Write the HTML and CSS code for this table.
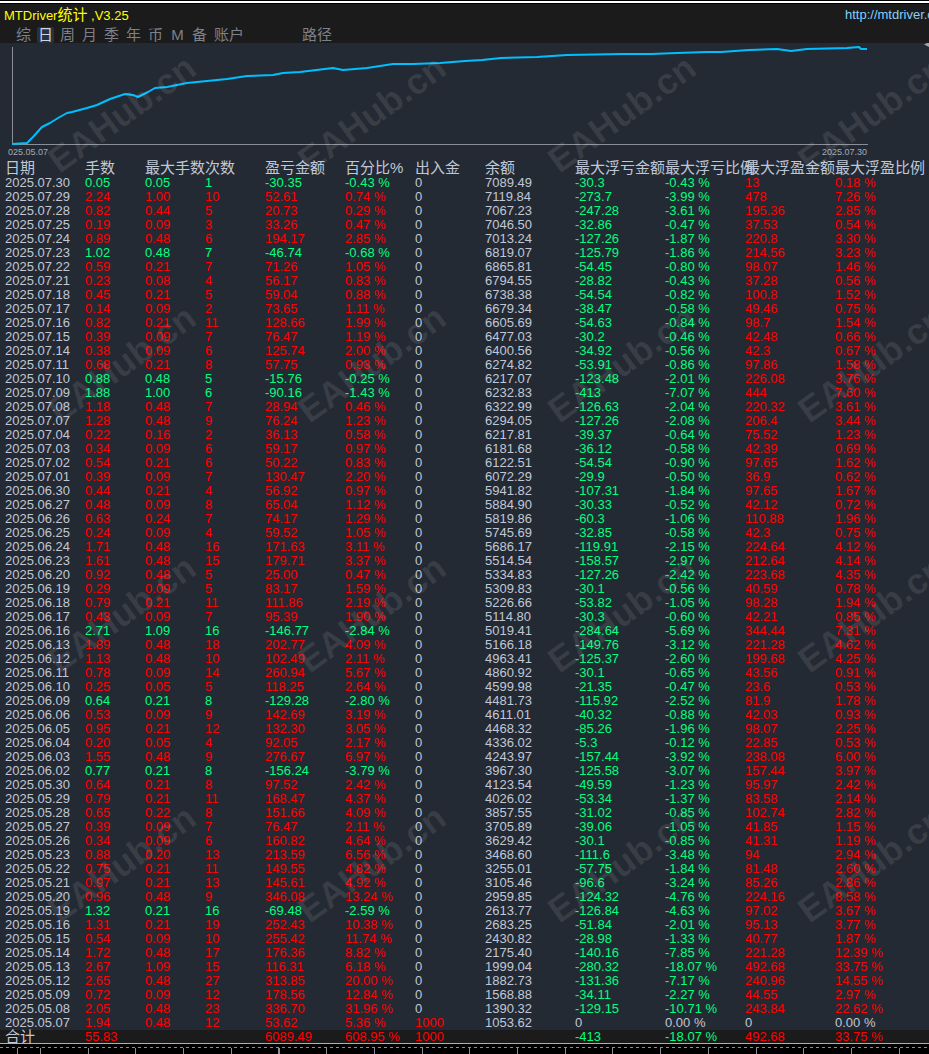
FILE: index.html
```html
<!DOCTYPE html>
<html lang="zh-CN">
<head>
<meta charset="utf-8">
<title>MTDriver统计</title>
<link rel="stylesheet" href="styles.css">
</head>
<body>
<div class="app">
  <div class="topline"></div>
  <header class="titlebar">
    <div class="title-row">
      <span class="title">MTDriver<span class="cjk">统计</span> ,V3.25</span>
      <span class="link">http://mtdriver.cn</span>
    </div>
    <nav class="tabs">
      <span class="tab">综</span><span class="tab active">日</span><span class="tab">周</span><span class="tab">月</span><span class="tab">季</span><span class="tab">年</span><span class="tab">币</span><span class="tab">M</span><span class="tab">备</span><span class="tab wide">账户</span><span class="tab path">路径</span>
    </nav>
  </header>
  <section class="chart">
    <svg class="curve" width="929" height="117" viewBox="0 0 929 117">
      <line class="axisline" x1="12.5" y1="4" x2="12.5" y2="101.5"/>
      <line class="axisline" x1="12" y1="101.5" x2="868" y2="101.5"/>
      <polyline class="equity" points="12,101 27,100 33,94 42,84 50,80 58,75 67,70 72,69 87,65 97,62 110,56 125,51 133,52 138,54 148,49 155,45 167,44 187,40 207,38 227,36 247,33 273,32 283,30 300,29 333,25 343,27 367,25 393,21 413,21 440,20 465,18 482,17 501,15 537,14 567,12 622,11 651,11 677,10 707,9 721,9 749,7 777,6 791,8 807,6 847,5 859,4 861,6 867,6"/>
      <text class="axislabel" x="8" y="112">025.05.07</text>
      <text class="axislabel" x="867" y="112" text-anchor="end">2025.07.30</text>
      <polygon class="marker" points="929,-1 924,1.5 929,4"/>
    </svg>
  </section>
  <div class="table">
    <div class="row head"><span>日期</span><span>手数</span><span>最大手数</span><span>次数</span><span>盈亏金额</span><span>百分比%</span><span>出入金</span><span>余额</span><span>最大浮亏金额</span><span>最大浮亏比例</span><span>最大浮盈金额</span><span>最大浮盈比例</span></div>
    <div class="row d loss"><span>2025.07.30</span><span>0.05</span><span>0.05</span><span>1</span><span>-30.35</span><span>-0.43 %</span><span>0</span><span>7089.49</span><span>-30.3</span><span>-0.43 %</span><span>13</span><span>0.18 %</span></div>
    <div class="row d"><span>2025.07.29</span><span>2.24</span><span>1.00</span><span>10</span><span>52.61</span><span>0.74 %</span><span>0</span><span>7119.84</span><span>-273.7</span><span>-3.99 %</span><span>478</span><span>7.26 %</span></div>
    <div class="row d"><span>2025.07.28</span><span>0.82</span><span>0.44</span><span>5</span><span>20.73</span><span>0.29 %</span><span>0</span><span>7067.23</span><span>-247.28</span><span>-3.61 %</span><span>195.36</span><span>2.85 %</span></div>
    <div class="row d"><span>2025.07.25</span><span>0.19</span><span>0.09</span><span>3</span><span>33.26</span><span>0.47 %</span><span>0</span><span>7046.50</span><span>-32.86</span><span>-0.47 %</span><span>37.53</span><span>0.54 %</span></div>
    <div class="row d"><span>2025.07.24</span><span>0.89</span><span>0.48</span><span>6</span><span>194.17</span><span>2.85 %</span><span>0</span><span>7013.24</span><span>-127.26</span><span>-1.87 %</span><span>220.8</span><span>3.30 %</span></div>
    <div class="row d loss"><span>2025.07.23</span><span>1.02</span><span>0.48</span><span>7</span><span>-46.74</span><span>-0.68 %</span><span>0</span><span>6819.07</span><span>-125.79</span><span>-1.86 %</span><span>214.56</span><span>3.23 %</span></div>
    <div class="row d"><span>2025.07.22</span><span>0.59</span><span>0.21</span><span>7</span><span>71.26</span><span>1.05 %</span><span>0</span><span>6865.81</span><span>-54.45</span><span>-0.80 %</span><span>98.07</span><span>1.46 %</span></div>
    <div class="row d"><span>2025.07.21</span><span>0.23</span><span>0.08</span><span>4</span><span>56.17</span><span>0.83 %</span><span>0</span><span>6794.55</span><span>-28.82</span><span>-0.43 %</span><span>37.28</span><span>0.56 %</span></div>
    <div class="row d"><span>2025.07.18</span><span>0.45</span><span>0.21</span><span>5</span><span>59.04</span><span>0.88 %</span><span>0</span><span>6738.38</span><span>-54.54</span><span>-0.82 %</span><span>100.8</span><span>1.52 %</span></div>
    <div class="row d"><span>2025.07.17</span><span>0.14</span><span>0.09</span><span>2</span><span>73.65</span><span>1.11 %</span><span>0</span><span>6679.34</span><span>-38.47</span><span>-0.58 %</span><span>49.46</span><span>0.75 %</span></div>
    <div class="row d"><span>2025.07.16</span><span>0.82</span><span>0.21</span><span>11</span><span>128.66</span><span>1.99 %</span><span>0</span><span>6605.69</span><span>-54.63</span><span>-0.84 %</span><span>98.7</span><span>1.54 %</span></div>
    <div class="row d"><span>2025.07.15</span><span>0.39</span><span>0.09</span><span>7</span><span>76.47</span><span>1.19 %</span><span>0</span><span>6477.03</span><span>-30.2</span><span>-0.46 %</span><span>42.48</span><span>0.66 %</span></div>
    <div class="row d"><span>2025.07.14</span><span>0.38</span><span>0.09</span><span>6</span><span>125.74</span><span>2.00 %</span><span>0</span><span>6400.56</span><span>-34.92</span><span>-0.56 %</span><span>42.3</span><span>0.67 %</span></div>
    <div class="row d"><span>2025.07.11</span><span>0.68</span><span>0.21</span><span>8</span><span>57.75</span><span>0.93 %</span><span>0</span><span>6274.82</span><span>-53.91</span><span>-0.86 %</span><span>97.86</span><span>1.58 %</span></div>
    <div class="row d loss"><span>2025.07.10</span><span>0.88</span><span>0.48</span><span>5</span><span>-15.76</span><span>-0.25 %</span><span>0</span><span>6217.07</span><span>-123.48</span><span>-2.01 %</span><span>226.08</span><span>3.76 %</span></div>
    <div class="row d loss"><span>2025.07.09</span><span>1.88</span><span>1.00</span><span>6</span><span>-90.16</span><span>-1.43 %</span><span>0</span><span>6232.83</span><span>-413</span><span>-7.07 %</span><span>444</span><span>7.60 %</span></div>
    <div class="row d"><span>2025.07.08</span><span>1.18</span><span>0.48</span><span>7</span><span>28.94</span><span>0.46 %</span><span>0</span><span>6322.99</span><span>-126.63</span><span>-2.04 %</span><span>220.32</span><span>3.61 %</span></div>
    <div class="row d"><span>2025.07.07</span><span>1.28</span><span>0.48</span><span>9</span><span>76.24</span><span>1.23 %</span><span>0</span><span>6294.05</span><span>-127.26</span><span>-2.08 %</span><span>206.4</span><span>3.44 %</span></div>
    <div class="row d"><span>2025.07.04</span><span>0.22</span><span>0.16</span><span>2</span><span>36.13</span><span>0.58 %</span><span>0</span><span>6217.81</span><span>-39.37</span><span>-0.64 %</span><span>75.52</span><span>1.23 %</span></div>
    <div class="row d"><span>2025.07.03</span><span>0.34</span><span>0.09</span><span>6</span><span>59.17</span><span>0.97 %</span><span>0</span><span>6181.68</span><span>-36.12</span><span>-0.58 %</span><span>42.39</span><span>0.69 %</span></div>
    <div class="row d"><span>2025.07.02</span><span>0.54</span><span>0.21</span><span>6</span><span>50.22</span><span>0.83 %</span><span>0</span><span>6122.51</span><span>-54.54</span><span>-0.90 %</span><span>97.65</span><span>1.62 %</span></div>
    <div class="row d"><span>2025.07.01</span><span>0.39</span><span>0.09</span><span>7</span><span>130.47</span><span>2.20 %</span><span>0</span><span>6072.29</span><span>-29.9</span><span>-0.50 %</span><span>36.9</span><span>0.62 %</span></div>
    <div class="row d"><span>2025.06.30</span><span>0.44</span><span>0.21</span><span>4</span><span>56.92</span><span>0.97 %</span><span>0</span><span>5941.82</span><span>-107.31</span><span>-1.84 %</span><span>97.65</span><span>1.67 %</span></div>
    <div class="row d"><span>2025.06.27</span><span>0.48</span><span>0.09</span><span>8</span><span>65.04</span><span>1.12 %</span><span>0</span><span>5884.90</span><span>-30.33</span><span>-0.52 %</span><span>42.12</span><span>0.72 %</span></div>
    <div class="row d"><span>2025.06.26</span><span>0.63</span><span>0.24</span><span>7</span><span>74.17</span><span>1.29 %</span><span>0</span><span>5819.86</span><span>-60.3</span><span>-1.06 %</span><span>110.88</span><span>1.96 %</span></div>
    <div class="row d"><span>2025.06.25</span><span>0.24</span><span>0.09</span><span>4</span><span>59.52</span><span>1.05 %</span><span>0</span><span>5745.69</span><span>-32.85</span><span>-0.58 %</span><span>42.3</span><span>0.75 %</span></div>
    <div class="row d"><span>2025.06.24</span><span>1.71</span><span>0.48</span><span>16</span><span>171.63</span><span>3.11 %</span><span>0</span><span>5686.17</span><span>-119.91</span><span>-2.15 %</span><span>224.64</span><span>4.12 %</span></div>
    <div class="row d"><span>2025.06.23</span><span>1.61</span><span>0.48</span><span>15</span><span>179.71</span><span>3.37 %</span><span>0</span><span>5514.54</span><span>-158.57</span><span>-2.97 %</span><span>212.64</span><span>4.14 %</span></div>
    <div class="row d"><span>2025.06.20</span><span>0.92</span><span>0.48</span><span>5</span><span>25.00</span><span>0.47 %</span><span>0</span><span>5334.83</span><span>-127.26</span><span>-2.42 %</span><span>223.68</span><span>4.35 %</span></div>
    <div class="row d"><span>2025.06.19</span><span>0.29</span><span>0.09</span><span>5</span><span>83.17</span><span>1.59 %</span><span>0</span><span>5309.83</span><span>-30.1</span><span>-0.56 %</span><span>40.59</span><span>0.78 %</span></div>
    <div class="row d"><span>2025.06.18</span><span>0.79</span><span>0.21</span><span>11</span><span>111.86</span><span>2.19 %</span><span>0</span><span>5226.66</span><span>-53.82</span><span>-1.05 %</span><span>98.28</span><span>1.94 %</span></div>
    <div class="row d"><span>2025.06.17</span><span>0.43</span><span>0.09</span><span>7</span><span>95.39</span><span>1.90 %</span><span>0</span><span>5114.80</span><span>-30.3</span><span>-0.60 %</span><span>42.21</span><span>0.85 %</span></div>
    <div class="row d loss"><span>2025.06.16</span><span>2.71</span><span>1.09</span><span>16</span><span>-146.77</span><span>-2.84 %</span><span>0</span><span>5019.41</span><span>-284.64</span><span>-5.69 %</span><span>344.44</span><span>7.31 %</span></div>
    <div class="row d"><span>2025.06.13</span><span>1.89</span><span>0.48</span><span>18</span><span>202.77</span><span>4.09 %</span><span>0</span><span>5166.18</span><span>-149.76</span><span>-3.12 %</span><span>221.28</span><span>4.62 %</span></div>
    <div class="row d"><span>2025.06.12</span><span>1.13</span><span>0.48</span><span>10</span><span>102.49</span><span>2.11 %</span><span>0</span><span>4963.41</span><span>-125.37</span><span>-2.60 %</span><span>199.68</span><span>4.25 %</span></div>
    <div class="row d"><span>2025.06.11</span><span>0.78</span><span>0.09</span><span>14</span><span>260.94</span><span>5.67 %</span><span>0</span><span>4860.92</span><span>-30.1</span><span>-0.65 %</span><span>43.56</span><span>0.91 %</span></div>
    <div class="row d"><span>2025.06.10</span><span>0.25</span><span>0.05</span><span>5</span><span>118.25</span><span>2.64 %</span><span>0</span><span>4599.98</span><span>-21.35</span><span>-0.47 %</span><span>23.6</span><span>0.53 %</span></div>
    <div class="row d loss"><span>2025.06.09</span><span>0.64</span><span>0.21</span><span>8</span><span>-129.28</span><span>-2.80 %</span><span>0</span><span>4481.73</span><span>-115.92</span><span>-2.52 %</span><span>81.9</span><span>1.78 %</span></div>
    <div class="row d"><span>2025.06.06</span><span>0.53</span><span>0.09</span><span>9</span><span>142.69</span><span>3.19 %</span><span>0</span><span>4611.01</span><span>-40.32</span><span>-0.88 %</span><span>42.03</span><span>0.93 %</span></div>
    <div class="row d"><span>2025.06.05</span><span>0.95</span><span>0.21</span><span>12</span><span>132.30</span><span>3.05 %</span><span>0</span><span>4468.32</span><span>-85.26</span><span>-1.96 %</span><span>98.07</span><span>2.25 %</span></div>
    <div class="row d"><span>2025.06.04</span><span>0.20</span><span>0.05</span><span>4</span><span>92.05</span><span>2.17 %</span><span>0</span><span>4336.02</span><span>-5.3</span><span>-0.12 %</span><span>22.85</span><span>0.53 %</span></div>
    <div class="row d"><span>2025.06.03</span><span>1.55</span><span>0.48</span><span>9</span><span>276.67</span><span>6.97 %</span><span>0</span><span>4243.97</span><span>-157.44</span><span>-3.92 %</span><span>238.08</span><span>6.00 %</span></div>
    <div class="row d loss"><span>2025.06.02</span><span>0.77</span><span>0.21</span><span>8</span><span>-156.24</span><span>-3.79 %</span><span>0</span><span>3967.30</span><span>-125.58</span><span>-3.07 %</span><span>157.44</span><span>3.97 %</span></div>
    <div class="row d"><span>2025.05.30</span><span>0.64</span><span>0.21</span><span>8</span><span>97.52</span><span>2.42 %</span><span>0</span><span>4123.54</span><span>-49.59</span><span>-1.23 %</span><span>95.97</span><span>2.42 %</span></div>
    <div class="row d"><span>2025.05.29</span><span>0.79</span><span>0.21</span><span>11</span><span>168.47</span><span>4.37 %</span><span>0</span><span>4026.02</span><span>-53.34</span><span>-1.37 %</span><span>83.58</span><span>2.14 %</span></div>
    <div class="row d"><span>2025.05.28</span><span>0.65</span><span>0.22</span><span>8</span><span>151.66</span><span>4.09 %</span><span>0</span><span>3857.55</span><span>-31.02</span><span>-0.85 %</span><span>102.74</span><span>2.82 %</span></div>
    <div class="row d"><span>2025.05.27</span><span>0.39</span><span>0.09</span><span>7</span><span>76.47</span><span>2.11 %</span><span>0</span><span>3705.89</span><span>-39.06</span><span>-1.05 %</span><span>41.85</span><span>1.15 %</span></div>
    <div class="row d"><span>2025.05.26</span><span>0.34</span><span>0.09</span><span>6</span><span>160.82</span><span>4.64 %</span><span>0</span><span>3629.42</span><span>-30.1</span><span>-0.85 %</span><span>41.31</span><span>1.19 %</span></div>
    <div class="row d"><span>2025.05.23</span><span>0.88</span><span>0.20</span><span>13</span><span>213.59</span><span>6.56 %</span><span>0</span><span>3468.60</span><span>-111.6</span><span>-3.48 %</span><span>94</span><span>2.94 %</span></div>
    <div class="row d"><span>2025.05.22</span><span>0.75</span><span>0.21</span><span>11</span><span>149.55</span><span>4.82 %</span><span>0</span><span>3255.01</span><span>-57.75</span><span>-1.84 %</span><span>81.48</span><span>2.60 %</span></div>
    <div class="row d"><span>2025.05.21</span><span>0.97</span><span>0.21</span><span>13</span><span>145.61</span><span>4.92 %</span><span>0</span><span>3105.46</span><span>-96.6</span><span>-3.24 %</span><span>85.26</span><span>2.86 %</span></div>
    <div class="row d"><span>2025.05.20</span><span>0.96</span><span>0.48</span><span>9</span><span>346.08</span><span>13.24 %</span><span>0</span><span>2959.85</span><span>-124.32</span><span>-4.76 %</span><span>224.16</span><span>8.58 %</span></div>
    <div class="row d loss"><span>2025.05.19</span><span>1.32</span><span>0.21</span><span>16</span><span>-69.48</span><span>-2.59 %</span><span>0</span><span>2613.77</span><span>-126.84</span><span>-4.63 %</span><span>97.02</span><span>3.67 %</span></div>
    <div class="row d"><span>2025.05.16</span><span>1.31</span><span>0.21</span><span>19</span><span>252.43</span><span>10.38 %</span><span>0</span><span>2683.25</span><span>-51.84</span><span>-2.01 %</span><span>95.13</span><span>3.77 %</span></div>
    <div class="row d"><span>2025.05.15</span><span>0.54</span><span>0.09</span><span>10</span><span>255.42</span><span>11.74 %</span><span>0</span><span>2430.82</span><span>-28.98</span><span>-1.33 %</span><span>40.77</span><span>1.87 %</span></div>
    <div class="row d"><span>2025.05.14</span><span>1.72</span><span>0.48</span><span>17</span><span>176.36</span><span>8.82 %</span><span>0</span><span>2175.40</span><span>-140.16</span><span>-7.85 %</span><span>221.28</span><span>12.39 %</span></div>
    <div class="row d"><span>2025.05.13</span><span>2.67</span><span>1.09</span><span>15</span><span>116.31</span><span>6.18 %</span><span>0</span><span>1999.04</span><span>-280.32</span><span>-18.07 %</span><span>492.68</span><span>33.75 %</span></div>
    <div class="row d"><span>2025.05.12</span><span>2.65</span><span>0.48</span><span>27</span><span>313.85</span><span>20.00 %</span><span>0</span><span>1882.73</span><span>-131.36</span><span>-7.17 %</span><span>240.96</span><span>14.55 %</span></div>
    <div class="row d"><span>2025.05.09</span><span>0.72</span><span>0.09</span><span>12</span><span>178.56</span><span>12.84 %</span><span>0</span><span>1568.88</span><span>-34.11</span><span>-2.27 %</span><span>44.55</span><span>2.97 %</span></div>
    <div class="row d"><span>2025.05.08</span><span>2.05</span><span>0.48</span><span>23</span><span>336.70</span><span>31.96 %</span><span>0</span><span>1390.32</span><span>-129.15</span><span>-10.71 %</span><span>243.84</span><span>22.62 %</span></div>
    <div class="row d first"><span>2025.05.07</span><span>1.94</span><span>0.48</span><span>12</span><span>53.62</span><span>5.36 %</span><span>1000</span><span>1053.62</span><span>0</span><span>0.00 %</span><span>0</span><span>0.00 %</span></div>
    <div class="row d total"><span>合计</span><span>55.83</span><span></span><span></span><span>6089.49</span><span>608.95 %</span><span>1000</span><span></span><span>-413</span><span>-18.07 %</span><span>492.68</span><span>33.75 %</span></div>
  </div>
  <div class="footer"><div class="dash"></div><div class="ticks"></div></div>
  <div class="watermarks">
    <div class="wm"><span>EAHub.cn</span></div><div class="wm"><span>EAHub.cn</span></div><div class="wm"><span>EAHub.cn</span></div><div class="wm"><span>EAHub.cn</span></div>
    <div class="wm"><span>EAHub.cn</span></div><div class="wm"><span>EAHub.cn</span></div><div class="wm"><span>EAHub.cn</span></div><div class="wm"><span>EAHub.cn</span></div>
    <div class="wm"><span>EAHub.cn</span></div><div class="wm"><span>EAHub.cn</span></div><div class="wm"><span>EAHub.cn</span></div><div class="wm"><span>EAHub.cn</span></div>
    <div class="wm"><span>EAHub.cn</span></div><div class="wm"><span>EAHub.cn</span></div><div class="wm"><span>EAHub.cn</span></div><div class="wm"><span>EAHub.cn</span></div>
  </div>
</div>
</body>
</html>
```

FILE: styles.css
```css
html, body {
  margin: 0;
  padding: 0;
  background: #000;
}

.app {
  position: relative;
  width: 929px;
  height: 1054px;
  overflow: hidden;
  background: #000;
  font-family: "Liberation Sans", "Noto Sans CJK SC", sans-serif;
}

.topline {
  height: 2px;
  background: #ffffff;
  border-top: 1px solid #000;
  border-bottom: 1px solid #000;
}

.titlebar {
  height: 39px;
  background: #1b1b1b;
  overflow: hidden;
}

.title-row {
  display: flex;
  height: 20px;
  line-height: 21px;
  padding-left: 4px;
  white-space: nowrap;
}

.title {
  flex: 0 0 841px;
  color: #ffff00;
  font-size: 13px;
}

.title .cjk {
  font-size: 15px;
}

.link {
  color: #87cefa;
  font-size: 13px;
}

.tabs {
  display: flex;
  gap: 5px;
  margin-top: 3px;
  padding-left: 15px;
  height: 16px;
  white-space: nowrap;
}

.tab {
  flex: 0 0 17px;
  height: 16px;
  line-height: 15px;
  font-size: 15px;
  color: #7c818a;
  text-align: center;
}

.tab.active {
  background: #2a313b;
  border-radius: 2px;
  color: #c8d6ee;
}

.tab.wide {
  flex-basis: 84px;
  text-align: left;
  padding-left: 1px;
  box-sizing: border-box;
}

.tab.path {
  flex-basis: 32px;
  text-align: left;
}

.chart {
  height: 117px;
  background: #242a33;
}

.curve {
  display: block;
}

.axisline {
  stroke: #8a8e96;
  stroke-width: 1;
}

.equity {
  fill: none;
  stroke: #00bfff;
  stroke-width: 2;
  stroke-linejoin: round;
}

.axislabel {
  font-family: "Liberation Sans", sans-serif;
  font-size: 9px;
  fill: #a3abb8;
}

.marker {
  fill: #a0a4aa;
}

.table {
  background: #242a33;
}

.row {
  display: grid;
  grid-template-columns: 80px 60px 60px 60px 80px 70px 70px 90px 90px 80px 90px 94px;
  padding-left: 5px;
  height: 14px;
  line-height: 14px;
  font-size: 13px;
  white-space: nowrap;
  color: #c0c8d8;
}

.row > span {
  overflow: visible;
}

.row.head {
  height: 16px;
  line-height: 16px;
  font-size: 15px;
  color: #c0c8d8;
}

.row.d > :nth-child(n+2):nth-child(-n+6) {
  color: #ff0000;
}

.row.d.loss > :nth-child(n+2):nth-child(-n+6) {
  color: #00ff7f;
}

.row.d > :nth-child(9),
.row.d > :nth-child(10) {
  color: #00ff7f;
}

.row.d > :nth-child(11),
.row.d > :nth-child(12) {
  color: #ff0000;
}

.row.first > :nth-child(7) {
  color: #ff0000;
}

.row.first > :nth-child(n+9) {
  color: #c0c8d8;
}

.row.total {
  height: 13px;
  line-height: 13px;
  background: #1b1b1b;
  border-bottom: 1px solid #a8b0bc;
}

.row.total > :first-child {
  font-size: 15px;
  line-height: 13px;
}

.row.total > :nth-child(7) {
  color: #ff0000;
}

.footer {
  height: 10px;
  background: #000;
}

.dash {
  margin-top: 3px;
  height: 1px;
  background: repeating-linear-gradient(90deg, #8a8f98 0 3px, transparent 3px 6px);
}

.ticks {
  height: 6px;
  background: repeating-linear-gradient(90deg, #8a8f98 0 1px, transparent 1px 47.7px);
  background-position: 40px 0;
}

.watermarks {
  position: absolute;
  top: 0;
  left: 0;
  width: 1200px;
  height: 1200px;
  padding: 60px 0 0 47px;
  box-sizing: border-box;
  display: grid;
  grid-template-columns: repeat(4, 150px);
  grid-template-rows: repeat(4, 107px);
  column-gap: 100px;
  row-gap: 143px;
  pointer-events: none;
}

.wm {
  display: flex;
  align-items: center;
  justify-content: center;
}

.wm span {
  transform: rotate(-36deg);
  font-family: "Liberation Sans", sans-serif;
  font-weight: bold;
  font-size: 36px;
  color: rgba(255, 255, 255, 0.09);
  white-space: nowrap;
}
```
